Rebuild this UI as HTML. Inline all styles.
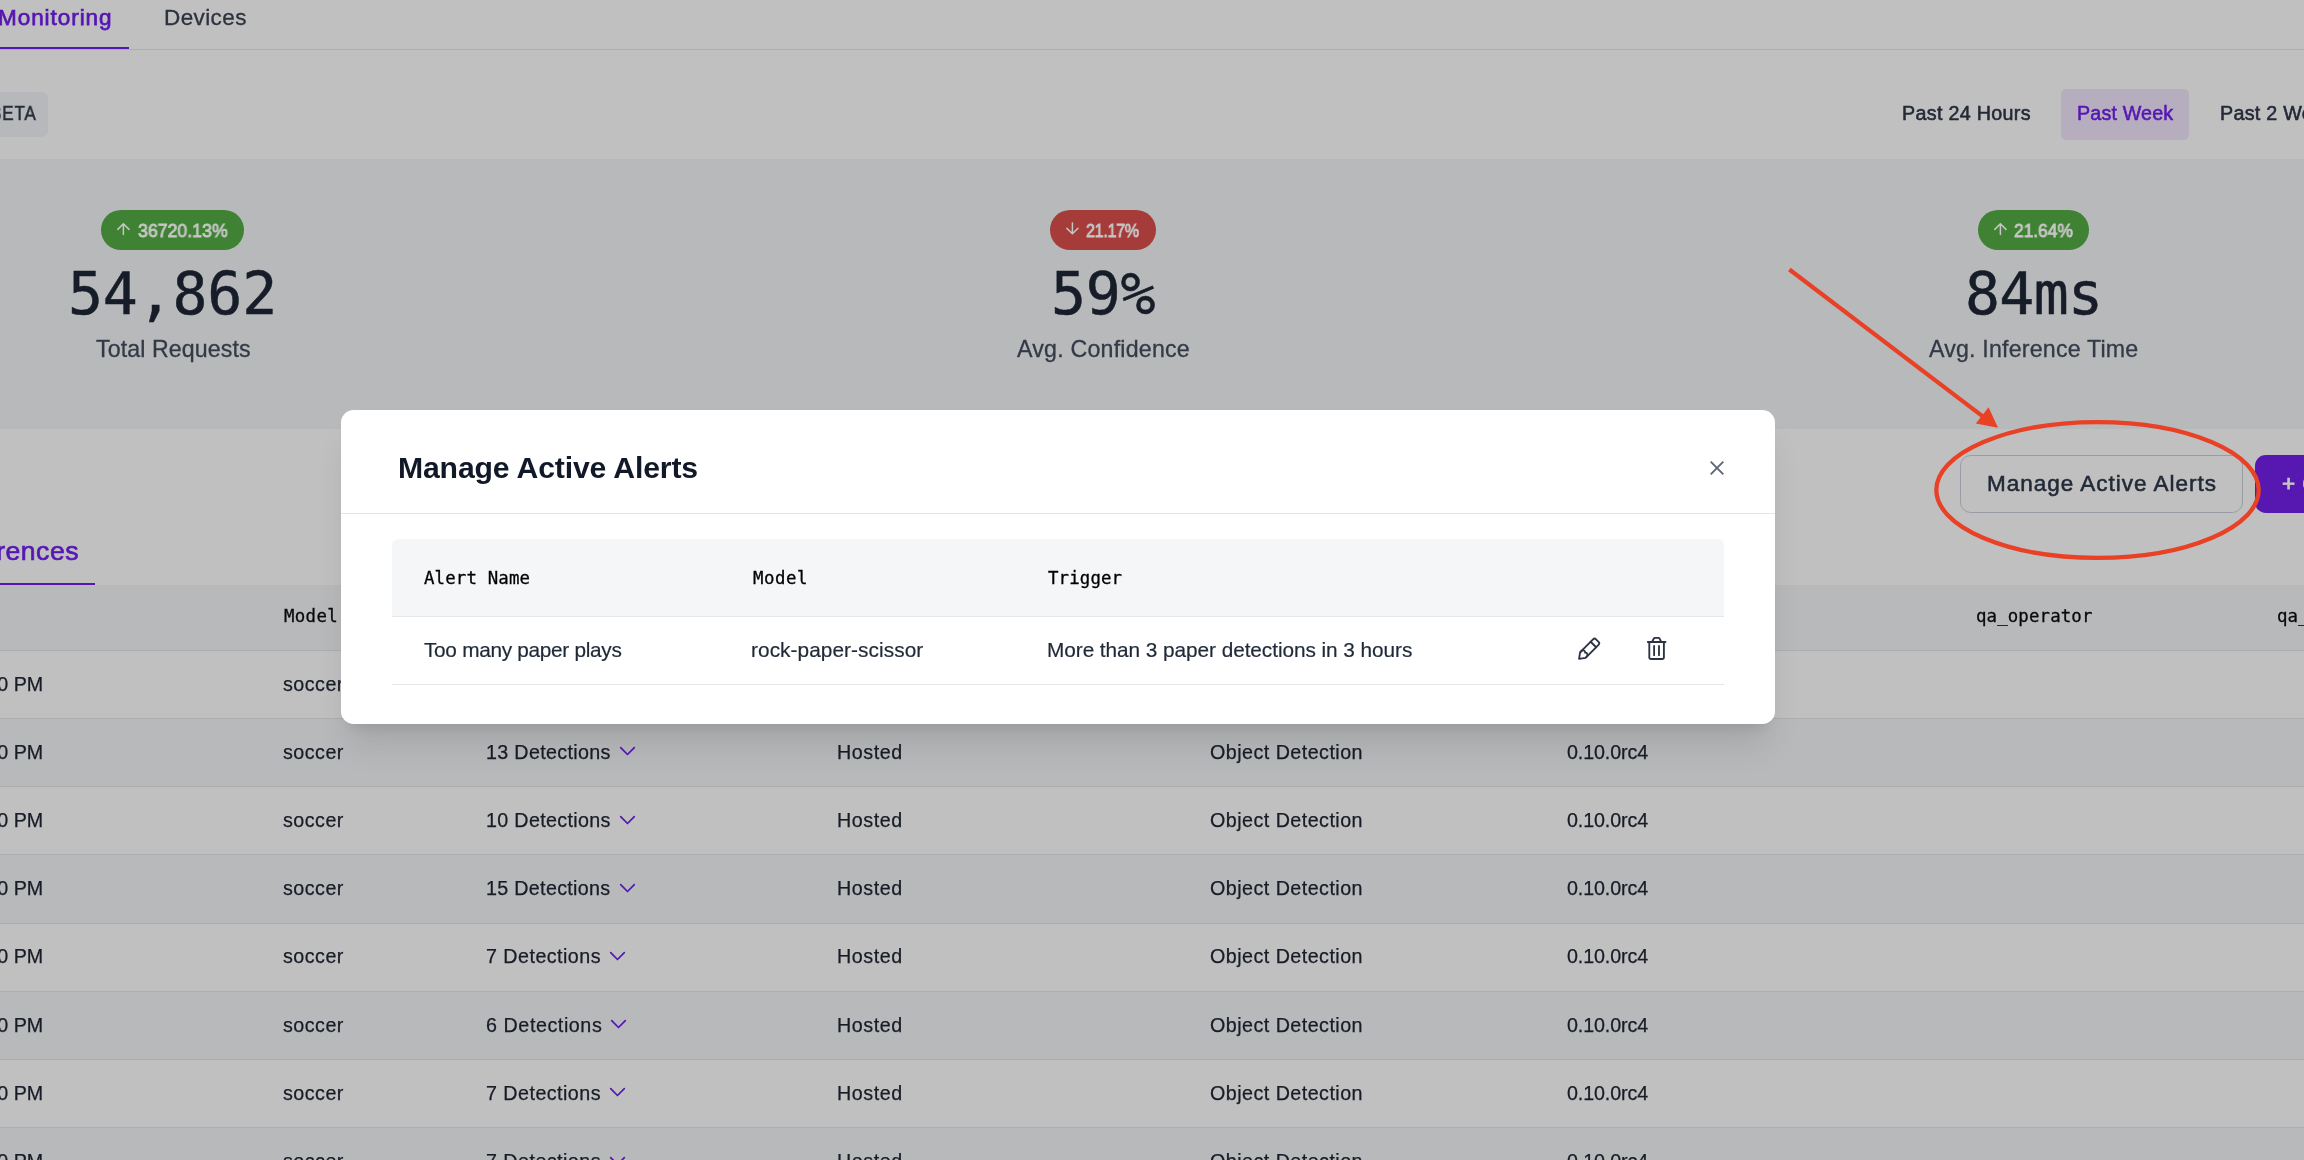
<!DOCTYPE html>
<html lang="en"><head><meta charset="utf-8"><title>Monitoring</title><style>
html,body{margin:0;padding:0;overflow:hidden}
body{width:2304px;height:1160px;overflow:hidden;position:relative;background:#c0c0c0;font-family:"Liberation Sans",sans-serif}
.b{position:absolute;box-sizing:border-box}
.a{position:absolute;overflow:visible}
.t{position:absolute;white-space:pre;line-height:1;will-change:transform;font-family:"Liberation Sans",sans-serif}
.m{font-family:"DejaVu Sans Mono","Liberation Mono",monospace}
.row{position:absolute;left:0;width:2304px;height:68.19px;box-sizing:border-box;border-bottom:1.33px solid #abadb1}
.badge{position:absolute;top:210px;height:40px;border-radius:20px}
#modal{position:absolute;left:340.9px;top:409.7px;width:1434.1px;height:314.2px;border-radius:12.6px;background:#fff;box-shadow:0 26.7px 33.3px -6.7px rgba(0,0,0,.1),0 10.7px 13.3px -8px rgba(0,0,0,.1)}
</style></head><body>
<main id="page">
<div class="b" style="left:0;top:48.8px;width:2304px;height:1.2px;background:#abadb1"></div>
<div class="b" style="left:0;top:46.7px;width:128.9px;height:2.3px;background:#5516b3"></div>
<div class="b" style="left:-20px;top:92.2px;width:67.9px;height:44.5px;border-radius:6.5px;background:#b7b8bb"></div>
<div class="b" style="left:2061.3px;top:89px;width:127.5px;height:50.9px;border-radius:5.5px;background:#b6adbf"></div>
<div class="b" style="left:0;top:158.5px;width:2304px;height:270.2px;background:#b8b9bb"></div>
<div class="badge" style="left:100.8px;width:143.3px;background:#3f8233"></div>
<div class="badge" style="left:1050.1px;width:106px;background:#a63c39"></div>
<div class="badge" style="left:1978px;width:110.9px;background:#3f8233"></div>
<svg class="a" style="left:117.4px;top:222.9px" width="12.8" height="11.6" viewBox="0 0 12.8 11.6"><path d="M6.4 0.9V11.6M0.8 6.4L6.4 0.8L12 6.4" fill="none" stroke="#c6c6c6" stroke-width="1.5" stroke-linecap="round" stroke-linejoin="round"/></svg><svg class="a" style="left:1065.7px;top:223.3px" width="12.8" height="11.6" viewBox="0 0 12.8 11.6"><path d="M6.4 0V10.7M0.8 5.2L6.4 10.8L12 5.2" fill="none" stroke="#c6c6c6" stroke-width="1.5" stroke-linecap="round" stroke-linejoin="round"/></svg><svg class="a" style="left:1993.6px;top:222.9px" width="12.8" height="11.6" viewBox="0 0 12.8 11.6"><path d="M6.4 0.9V11.6M0.8 6.4L6.4 0.8L12 6.4" fill="none" stroke="#c6c6c6" stroke-width="1.5" stroke-linecap="round" stroke-linejoin="round"/></svg>
<div class="b" style="left:1960px;top:454.7px;width:283px;height:58.3px;border:1.33px solid #989ca3;border-radius:10.7px"></div>
<div class="b" style="left:2254.9px;top:454.7px;width:120px;height:58.3px;border-radius:10.7px;background:#5618b0"></div>
<div class="b" style="left:0;top:582.8px;width:95px;height:2.2px;background:#5516b3"></div>
<div class="b" style="left:0;top:584.8px;width:2304px;height:66.07px;background:#b8b9bb;border-bottom:1.33px solid #abadb1"></div>
<div class="row" style="top:650.87px;background:#c0c0c0"></div><div class="row" style="top:719.06px;background:#b8b9bb"></div><div class="row" style="top:787.25px;background:#c0c0c0"></div><div class="row" style="top:855.44px;background:#b8b9bb"></div><div class="row" style="top:923.63px;background:#c0c0c0"></div><div class="row" style="top:991.82px;background:#b8b9bb"></div><div class="row" style="top:1060.01px;background:#c0c0c0"></div><div class="row" style="top:1128.20px;background:#b8b9bb"></div>
<svg class="a" style="left:619.1px;top:746.4px" width="17" height="11" viewBox="0 0 17 11"><path d="M1.7 1.7L8.5 8.5L15.3 1.7" fill="none" stroke="#5516b3" stroke-width="1.7" stroke-linecap="round" stroke-linejoin="round"/></svg><svg class="a" style="left:619.1px;top:814.6px" width="17" height="11" viewBox="0 0 17 11"><path d="M1.7 1.7L8.5 8.5L15.3 1.7" fill="none" stroke="#5516b3" stroke-width="1.7" stroke-linecap="round" stroke-linejoin="round"/></svg><svg class="a" style="left:619.1px;top:882.8px" width="17" height="11" viewBox="0 0 17 11"><path d="M1.7 1.7L8.5 8.5L15.3 1.7" fill="none" stroke="#5516b3" stroke-width="1.7" stroke-linecap="round" stroke-linejoin="round"/></svg><svg class="a" style="left:609.1px;top:951.0px" width="17" height="11" viewBox="0 0 17 11"><path d="M1.7 1.7L8.5 8.5L15.3 1.7" fill="none" stroke="#5516b3" stroke-width="1.7" stroke-linecap="round" stroke-linejoin="round"/></svg><svg class="a" style="left:610.4px;top:1019.1px" width="17" height="11" viewBox="0 0 17 11"><path d="M1.7 1.7L8.5 8.5L15.3 1.7" fill="none" stroke="#5516b3" stroke-width="1.7" stroke-linecap="round" stroke-linejoin="round"/></svg><svg class="a" style="left:609.1px;top:1087.3px" width="17" height="11" viewBox="0 0 17 11"><path d="M1.7 1.7L8.5 8.5L15.3 1.7" fill="none" stroke="#5516b3" stroke-width="1.7" stroke-linecap="round" stroke-linejoin="round"/></svg><svg class="a" style="left:609.1px;top:1155.5px" width="17" height="11" viewBox="0 0 17 11"><path d="M1.7 1.7L8.5 8.5L15.3 1.7" fill="none" stroke="#5516b3" stroke-width="1.7" stroke-linecap="round" stroke-linejoin="round"/></svg>
<span class="t" style="left:164.10px;top:7.45px;font-size:22.5px;color:#2b323e;letter-spacing:0.400px;-webkit-text-stroke:0.3px #2b323e;">Devices</span>
<span class="t" style="left:-1.60px;top:7.45px;font-size:22.5px;color:#5516b3;letter-spacing:0.950px;-webkit-text-stroke:0.75px #5516b3;">Monitoring</span>
<span class="t" style="left:-10.50px;top:104.31px;font-size:19.6px;color:#262c38;letter-spacing:0.795px;-webkit-text-stroke:0.45px #262c38;transform:scaleX(0.88);transform-origin:0 0;">BETA</span>
<span class="t" style="left:1902.00px;top:104.12px;font-size:19.7px;color:#232936;letter-spacing:0.317px;-webkit-text-stroke:0.55px #232936;">Past 24 Hours</span>
<span class="t" style="left:2077.20px;top:104.12px;font-size:19.7px;color:#5516b3;letter-spacing:0.163px;-webkit-text-stroke:0.55px #5516b3;">Past Week</span>
<span class="t" style="left:2220.00px;top:104.12px;font-size:19.7px;color:#232936;letter-spacing:0.280px;-webkit-text-stroke:0.55px #232936;">Past 2 Weeks</span>
<span class="t" style="left:137.60px;top:221.71px;font-size:18.3px;color:#c6c6c6;letter-spacing:-0.013px;-webkit-text-stroke:0.85px #c6c6c6;transform:scaleX(0.97);transform-origin:0 0;">36720.13%</span>
<span class="t" style="left:1086.20px;top:221.71px;font-size:18.3px;color:#c6c6c6;letter-spacing:-0.341px;-webkit-text-stroke:0.85px #c6c6c6;transform:scaleX(0.88);transform-origin:0 0;">21.17%</span>
<span class="t" style="left:2013.50px;top:221.71px;font-size:18.3px;color:#c6c6c6;letter-spacing:-0.021px;-webkit-text-stroke:0.85px #c6c6c6;transform:scaleX(0.95);transform-origin:0 0;">21.64%</span>
<span class="t m" style="left:68.10px;top:265.35px;font-size:58.2px;color:#161c28;letter-spacing:-0.200px;-webkit-text-stroke:0.5px #161c28;">54,862</span>
<span class="t m" style="left:1050.50px;top:265.35px;font-size:58.2px;color:#161c28;letter-spacing:-0.250px;-webkit-text-stroke:0.5px #161c28;">59%</span>
<span class="t m" style="left:1964.50px;top:265.35px;font-size:58.2px;color:#161c28;letter-spacing:-0.700px;-webkit-text-stroke:0.5px #161c28;">84ms</span>
<span class="t" style="left:95.90px;top:338.46px;font-size:23.2px;color:#333a47;letter-spacing:0.100px;-webkit-text-stroke:0.3px #333a47;">Total Requests</span>
<span class="t" style="left:1017.40px;top:338.46px;font-size:23.2px;color:#333a47;letter-spacing:0.214px;-webkit-text-stroke:0.3px #333a47;">Avg. Confidence</span>
<span class="t" style="left:1929.30px;top:338.46px;font-size:23.2px;color:#333a47;letter-spacing:0.189px;-webkit-text-stroke:0.3px #333a47;">Avg. Inference Time</span>
<span class="t" style="left:1986.50px;top:473.05px;font-size:22.5px;color:#232a37;letter-spacing:0.989px;-webkit-text-stroke:0.55px #232a37;">Manage Active Alerts</span>
<span class="t" style="left:2281.80px;top:473.05px;font-size:22.5px;color:#c4c4c4;letter-spacing:0.989px;-webkit-text-stroke:0.8px #c4c4c4;word-spacing:-1px;">+ Create Alert</span>
<span class="t" style="left:-50.20px;top:538.28px;font-size:26.6px;color:#5516b3;letter-spacing:0.475px;-webkit-text-stroke:0.65px #5516b3;">Inferences</span>
<span class="t m" style="left:283.70px;top:608.48px;font-size:17.4px;color:#08090c;letter-spacing:0.325px;-webkit-text-stroke:0.3px #08090c;">Model</span>
<span class="t m" style="left:1975.70px;top:608.48px;font-size:17.4px;color:#08090c;letter-spacing:0.120px;-webkit-text-stroke:0.3px #08090c;">qa_operator</span>
<span class="t m" style="left:2276.90px;top:608.48px;font-size:17.4px;color:#08090c;letter-spacing:0.120px;-webkit-text-stroke:0.3px #08090c;">qa_reviewer</span>
<span class="t" style="left:-41.00px;top:674.72px;font-size:19.7px;color:#171c27;-webkit-text-stroke:0.25px #171c27;">12:30 PM</span>
<span class="t" style="left:283.00px;top:674.72px;font-size:19.7px;color:#171c27;letter-spacing:0.480px;-webkit-text-stroke:0.25px #171c27;">soccer</span>
<span class="t" style="left:-41.00px;top:742.91px;font-size:19.7px;color:#171c27;-webkit-text-stroke:0.25px #171c27;">12:30 PM</span>
<span class="t" style="left:283.00px;top:742.91px;font-size:19.7px;color:#171c27;letter-spacing:0.480px;-webkit-text-stroke:0.25px #171c27;">soccer</span>
<span class="t" style="left:485.80px;top:742.91px;font-size:19.7px;color:#171c27;letter-spacing:0.333px;-webkit-text-stroke:0.25px #171c27;">13 Detections</span>
<span class="t" style="left:836.60px;top:742.91px;font-size:19.7px;color:#171c27;letter-spacing:0.540px;-webkit-text-stroke:0.25px #171c27;">Hosted</span>
<span class="t" style="left:1209.50px;top:742.91px;font-size:19.7px;color:#171c27;letter-spacing:0.467px;-webkit-text-stroke:0.25px #171c27;">Object Detection</span>
<span class="t" style="left:1567.20px;top:742.91px;font-size:19.7px;color:#171c27;letter-spacing:-0.125px;-webkit-text-stroke:0.25px #171c27;">0.10.0rc4</span>
<span class="t" style="left:-41.00px;top:811.10px;font-size:19.7px;color:#171c27;-webkit-text-stroke:0.25px #171c27;">12:30 PM</span>
<span class="t" style="left:283.00px;top:811.10px;font-size:19.7px;color:#171c27;letter-spacing:0.480px;-webkit-text-stroke:0.25px #171c27;">soccer</span>
<span class="t" style="left:485.80px;top:811.10px;font-size:19.7px;color:#171c27;letter-spacing:0.333px;-webkit-text-stroke:0.25px #171c27;">10 Detections</span>
<span class="t" style="left:836.60px;top:811.10px;font-size:19.7px;color:#171c27;letter-spacing:0.540px;-webkit-text-stroke:0.25px #171c27;">Hosted</span>
<span class="t" style="left:1209.50px;top:811.10px;font-size:19.7px;color:#171c27;letter-spacing:0.467px;-webkit-text-stroke:0.25px #171c27;">Object Detection</span>
<span class="t" style="left:1567.20px;top:811.10px;font-size:19.7px;color:#171c27;letter-spacing:-0.125px;-webkit-text-stroke:0.25px #171c27;">0.10.0rc4</span>
<span class="t" style="left:-41.00px;top:879.29px;font-size:19.7px;color:#171c27;-webkit-text-stroke:0.25px #171c27;">12:30 PM</span>
<span class="t" style="left:283.00px;top:879.29px;font-size:19.7px;color:#171c27;letter-spacing:0.480px;-webkit-text-stroke:0.25px #171c27;">soccer</span>
<span class="t" style="left:485.80px;top:879.29px;font-size:19.7px;color:#171c27;letter-spacing:0.317px;-webkit-text-stroke:0.25px #171c27;">15 Detections</span>
<span class="t" style="left:836.60px;top:879.29px;font-size:19.7px;color:#171c27;letter-spacing:0.540px;-webkit-text-stroke:0.25px #171c27;">Hosted</span>
<span class="t" style="left:1209.50px;top:879.29px;font-size:19.7px;color:#171c27;letter-spacing:0.467px;-webkit-text-stroke:0.25px #171c27;">Object Detection</span>
<span class="t" style="left:1567.20px;top:879.29px;font-size:19.7px;color:#171c27;letter-spacing:-0.125px;-webkit-text-stroke:0.25px #171c27;">0.10.0rc4</span>
<span class="t" style="left:-41.00px;top:947.48px;font-size:19.7px;color:#171c27;-webkit-text-stroke:0.25px #171c27;">12:30 PM</span>
<span class="t" style="left:283.00px;top:947.48px;font-size:19.7px;color:#171c27;letter-spacing:0.480px;-webkit-text-stroke:0.25px #171c27;">soccer</span>
<span class="t" style="left:485.80px;top:947.48px;font-size:19.7px;color:#171c27;letter-spacing:0.464px;-webkit-text-stroke:0.25px #171c27;">7 Detections</span>
<span class="t" style="left:836.60px;top:947.48px;font-size:19.7px;color:#171c27;letter-spacing:0.540px;-webkit-text-stroke:0.25px #171c27;">Hosted</span>
<span class="t" style="left:1209.50px;top:947.48px;font-size:19.7px;color:#171c27;letter-spacing:0.467px;-webkit-text-stroke:0.25px #171c27;">Object Detection</span>
<span class="t" style="left:1567.20px;top:947.48px;font-size:19.7px;color:#171c27;letter-spacing:-0.125px;-webkit-text-stroke:0.25px #171c27;">0.10.0rc4</span>
<span class="t" style="left:-41.00px;top:1015.67px;font-size:19.7px;color:#171c27;-webkit-text-stroke:0.25px #171c27;">12:30 PM</span>
<span class="t" style="left:283.00px;top:1015.67px;font-size:19.7px;color:#171c27;letter-spacing:0.480px;-webkit-text-stroke:0.25px #171c27;">soccer</span>
<span class="t" style="left:485.80px;top:1015.67px;font-size:19.7px;color:#171c27;letter-spacing:0.573px;-webkit-text-stroke:0.25px #171c27;">6 Detections</span>
<span class="t" style="left:836.60px;top:1015.67px;font-size:19.7px;color:#171c27;letter-spacing:0.540px;-webkit-text-stroke:0.25px #171c27;">Hosted</span>
<span class="t" style="left:1209.50px;top:1015.67px;font-size:19.7px;color:#171c27;letter-spacing:0.467px;-webkit-text-stroke:0.25px #171c27;">Object Detection</span>
<span class="t" style="left:1567.20px;top:1015.67px;font-size:19.7px;color:#171c27;letter-spacing:-0.125px;-webkit-text-stroke:0.25px #171c27;">0.10.0rc4</span>
<span class="t" style="left:-41.00px;top:1083.86px;font-size:19.7px;color:#171c27;-webkit-text-stroke:0.25px #171c27;">12:30 PM</span>
<span class="t" style="left:283.00px;top:1083.86px;font-size:19.7px;color:#171c27;letter-spacing:0.480px;-webkit-text-stroke:0.25px #171c27;">soccer</span>
<span class="t" style="left:485.80px;top:1083.86px;font-size:19.7px;color:#171c27;letter-spacing:0.464px;-webkit-text-stroke:0.25px #171c27;">7 Detections</span>
<span class="t" style="left:836.60px;top:1083.86px;font-size:19.7px;color:#171c27;letter-spacing:0.540px;-webkit-text-stroke:0.25px #171c27;">Hosted</span>
<span class="t" style="left:1209.50px;top:1083.86px;font-size:19.7px;color:#171c27;letter-spacing:0.467px;-webkit-text-stroke:0.25px #171c27;">Object Detection</span>
<span class="t" style="left:1567.20px;top:1083.86px;font-size:19.7px;color:#171c27;letter-spacing:-0.125px;-webkit-text-stroke:0.25px #171c27;">0.10.0rc4</span>
<span class="t" style="left:-41.00px;top:1152.05px;font-size:19.7px;color:#171c27;-webkit-text-stroke:0.25px #171c27;">12:30 PM</span>
<span class="t" style="left:283.00px;top:1152.05px;font-size:19.7px;color:#171c27;letter-spacing:0.480px;-webkit-text-stroke:0.25px #171c27;">soccer</span>
<span class="t" style="left:485.80px;top:1152.05px;font-size:19.7px;color:#171c27;letter-spacing:0.464px;-webkit-text-stroke:0.25px #171c27;">7 Detections</span>
<span class="t" style="left:836.60px;top:1152.05px;font-size:19.7px;color:#171c27;letter-spacing:0.540px;-webkit-text-stroke:0.25px #171c27;">Hosted</span>
<span class="t" style="left:1209.50px;top:1152.05px;font-size:19.7px;color:#171c27;letter-spacing:0.467px;-webkit-text-stroke:0.25px #171c27;">Object Detection</span>
<span class="t" style="left:1567.20px;top:1152.05px;font-size:19.7px;color:#171c27;letter-spacing:-0.125px;-webkit-text-stroke:0.25px #171c27;">0.10.0rc4</span>
</main>
<div role="dialog" aria-modal="true" aria-label="Manage Active Alerts">
<div id="modal"></div>
<div class="b" style="left:340.9px;top:512.9px;width:1434.1px;height:1.1px;background:#e3e5ea"></div>
<div class="b" style="left:392.2px;top:539px;width:1331.7px;height:77.6px;background:#f5f6f8;border-radius:6px 6px 0 0;border-bottom:1.33px solid #e5e7eb"></div>
<div class="b" style="left:392.2px;top:683.7px;width:1331.7px;height:1.33px;background:#e5e7eb"></div>
<svg class="a" style="left:1710.3px;top:461.4px" width="14" height="14" viewBox="0 0 14 14"><path d="M0.7 0.7L13.3 13.3M13.3 0.7L0.7 13.3" stroke="#5e6777" stroke-width="1.9" stroke-linecap="butt" fill="none"/></svg>
<svg class="a" style="left:1577.8px;top:637.1px" width="22.4" height="22.9" viewBox="0 0 22.4 22.9"><g transform="translate(0.9 22) rotate(-45)" fill="none" stroke="#2b3345" stroke-width="1.85" stroke-linejoin="round" stroke-linecap="round"><path d="M0.2 0L5.6 -3.9H23.9Q26 -3.9 26 -1.8V1.8Q26 3.9 23.9 3.9H5.6Z"/><path d="M20.5 -3.9V3.9"/><path d="M6.9 -3.7A2.15 2.15 0 0 1 8.9 0A2.15 2.15 0 0 1 6.9 3.7"/></g></svg>
<svg class="a" style="left:1646.8px;top:636.9px" width="19.6" height="23" viewBox="0 0 19.6 23"><g fill="none" stroke="#2b3345" stroke-width="1.85" stroke-linecap="round" stroke-linejoin="round"><path d="M0.8 5H18.5"/><path d="M5 5L6.7 1.7Q7.1 0.9 8 0.9H11.3Q12.2 0.9 12.6 1.7L14.3 5"/><path d="M2.3 5.2V20.2Q2.3 22 4.1 22H15.1Q16.9 22 16.9 20.2V5.2"/><path d="M7.1 9V18.2M12 9V18.2"/></g></svg>
<span class="t" style="left:398.00px;top:453.03px;font-size:30.2px;color:#111827;font-weight:700;letter-spacing:-0.158px;">Manage Active Alerts</span>
<span class="t m" style="left:424.30px;top:569.78px;font-size:17.4px;color:#000;letter-spacing:0.144px;-webkit-text-stroke:0.3px #000;">Alert Name</span>
<span class="t m" style="left:752.50px;top:569.78px;font-size:17.4px;color:#000;letter-spacing:0.500px;-webkit-text-stroke:0.3px #000;">Model</span>
<span class="t m" style="left:1048.40px;top:569.78px;font-size:17.4px;color:#000;letter-spacing:0.133px;-webkit-text-stroke:0.3px #000;">Trigger</span>
<span class="t" style="left:424.00px;top:640.29px;font-size:20.8px;color:#1f2937;letter-spacing:-0.295px;-webkit-text-stroke:0.2px #1f2937;">Too many paper plays</span>
<span class="t" style="left:751.40px;top:640.29px;font-size:20.8px;color:#1f2937;letter-spacing:0.071px;-webkit-text-stroke:0.2px #1f2937;">rock-paper-scissor</span>
<span class="t" style="left:1046.60px;top:640.29px;font-size:20.8px;color:#1f2937;letter-spacing:-0.061px;-webkit-text-stroke:0.2px #1f2937;">More than 3 paper detections in 3 hours</span>
</div>
<svg class="a" aria-hidden="true" style="left:0;top:0" width="2304" height="1160" viewBox="0 0 2304 1160"><ellipse cx="2097.5" cy="490" rx="161.2" ry="67.9" fill="none" stroke="#e84126" stroke-width="4.3"/><path d="M1789.4 269.5L1986 418.8" stroke="#e84126" stroke-width="4.2" fill="none"/><path d="M1998 427.8L1975.8 423.6L1988.6 407.3Z" fill="#e84126"/></svg>
</body></html>
